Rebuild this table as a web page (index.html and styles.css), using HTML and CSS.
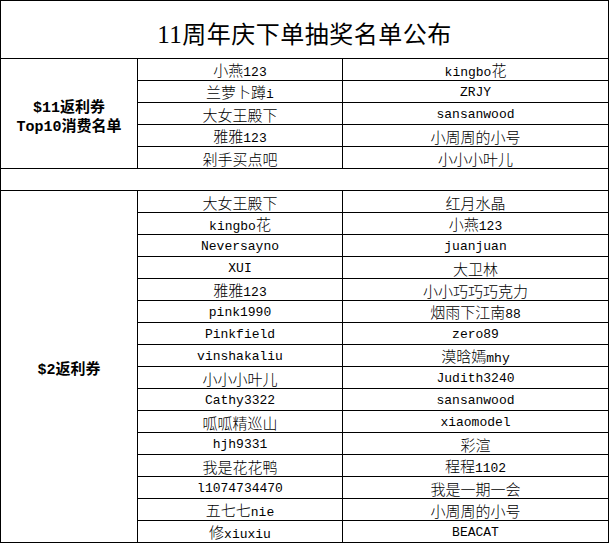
FILE: index.html
```html
<!DOCTYPE html>
<html lang="zh-CN">
<head>
<meta charset="utf-8">
<title>11周年庆下单抽奖名单公布</title>
<link rel="stylesheet" href="styles.css">
</head>
<body>
<table class="sheet">
  <colgroup>
    <col class="c1"><col class="c2"><col class="c3">
  </colgroup>
  <tr class="title-row"><td colspan="3" class="title"><span class="tn">11</span>周年庆下单抽奖名单公布</td></tr>
  <tr><td rowspan="5" class="head"><span class="hm">$11</span>返利券<br><span class="hm">Top10</span>消费名单</td><td>小燕<span class="m">123</span></td><td><span class="m">kingbo</span>花</td></tr>
  <tr><td>兰萝卜蹲<span class="m">i</span></td><td class="m">ZRJY</td></tr>
  <tr><td>大女王殿下</td><td class="m">sansanwood</td></tr>
  <tr><td>雅雅<span class="m">123</span></td><td>小周周的小号</td></tr>
  <tr><td>剁手买点吧</td><td>小小小叶儿</td></tr>
  <tr><td colspan="3" class="gap"></td></tr>
  <tr><td rowspan="16" class="head"><span class="hm">$2</span>返利券</td><td>大女王殿下</td><td>红月水晶</td></tr>
  <tr><td><span class="m">kingbo</span>花</td><td>小燕<span class="m">123</span></td></tr>
  <tr><td class="m">Neversayno</td><td class="m">juanjuan</td></tr>
  <tr><td class="m">XUI</td><td>大卫林</td></tr>
  <tr><td>雅雅<span class="m">123</span></td><td>小小巧巧巧克力</td></tr>
  <tr><td class="m">pink1990</td><td>烟雨下江南<span class="m">88</span></td></tr>
  <tr><td class="m">Pinkfield</td><td class="m">zero89</td></tr>
  <tr><td class="m">vinshakaliu</td><td>漠晗嫣<span class="m">mhy</span></td></tr>
  <tr><td>小小小叶儿</td><td class="m">Judith3240</td></tr>
  <tr><td class="m">Cathy3322</td><td class="m">sansanwood</td></tr>
  <tr><td>呱呱精巡山</td><td class="m">xiaomodel</td></tr>
  <tr><td class="m">hjh9331</td><td>彩渲</td></tr>
  <tr><td>我是花花鸭</td><td>程程<span class="m">1102</span></td></tr>
  <tr><td class="m">l1074734470</td><td>我是一期一会</td></tr>
  <tr><td>五七七<span class="m">nie</span></td><td>小周周的小号</td></tr>
  <tr><td>修<span class="m">xiuxiu</span></td><td class="m">BEACAT</td></tr>
</table>
</body>
</html>
```
FILE: styles.css
```css
html, body {
  margin: 0;
  padding: 0;
  background: #ffffff;
}

.sheet {
  border-collapse: collapse;
  table-layout: fixed;
  width: 608px;
  font-family: "Noto Sans CJK SC", "Liberation Mono", sans-serif;
  font-size: 15px;
  font-weight: 300;
  color: #000;
}

.c1 { width: 137px; }
.c2 { width: 205px; }
.c3 { width: 266px; }

.sheet tr {
  height: 22px;
}

.sheet tr.title-row {
  height: 58px;
}

.sheet td {
  border: 1px solid #000;
  padding: 2px 0 0 0;
  line-height: 16px;
  text-align: center;
  vertical-align: middle;
  white-space: nowrap;
  overflow: hidden;
}

.sheet td.title {
  font-size: 24px;
  line-height: 28px;
  padding-top: 6px;
  font-weight: 400;
  letter-spacing: 0.5px;
}

.tn {
  font-family: "Liberation Serif", serif;
  font-size: 25px;
  line-height: 1;
}

.sheet td.head {
  font-weight: bold;
  line-height: 18px;
  padding-top: 4px;
}

.hm {
  font-family: "Liberation Mono", monospace;
  font-size: 15px;
  font-weight: bold;
  line-height: 1;
}

.m {
  font-family: "Liberation Mono", monospace;
  font-size: 13px;
  font-weight: 400;
  line-height: 1;
}

.sheet td.m {
  line-height: 16px;
}
```
